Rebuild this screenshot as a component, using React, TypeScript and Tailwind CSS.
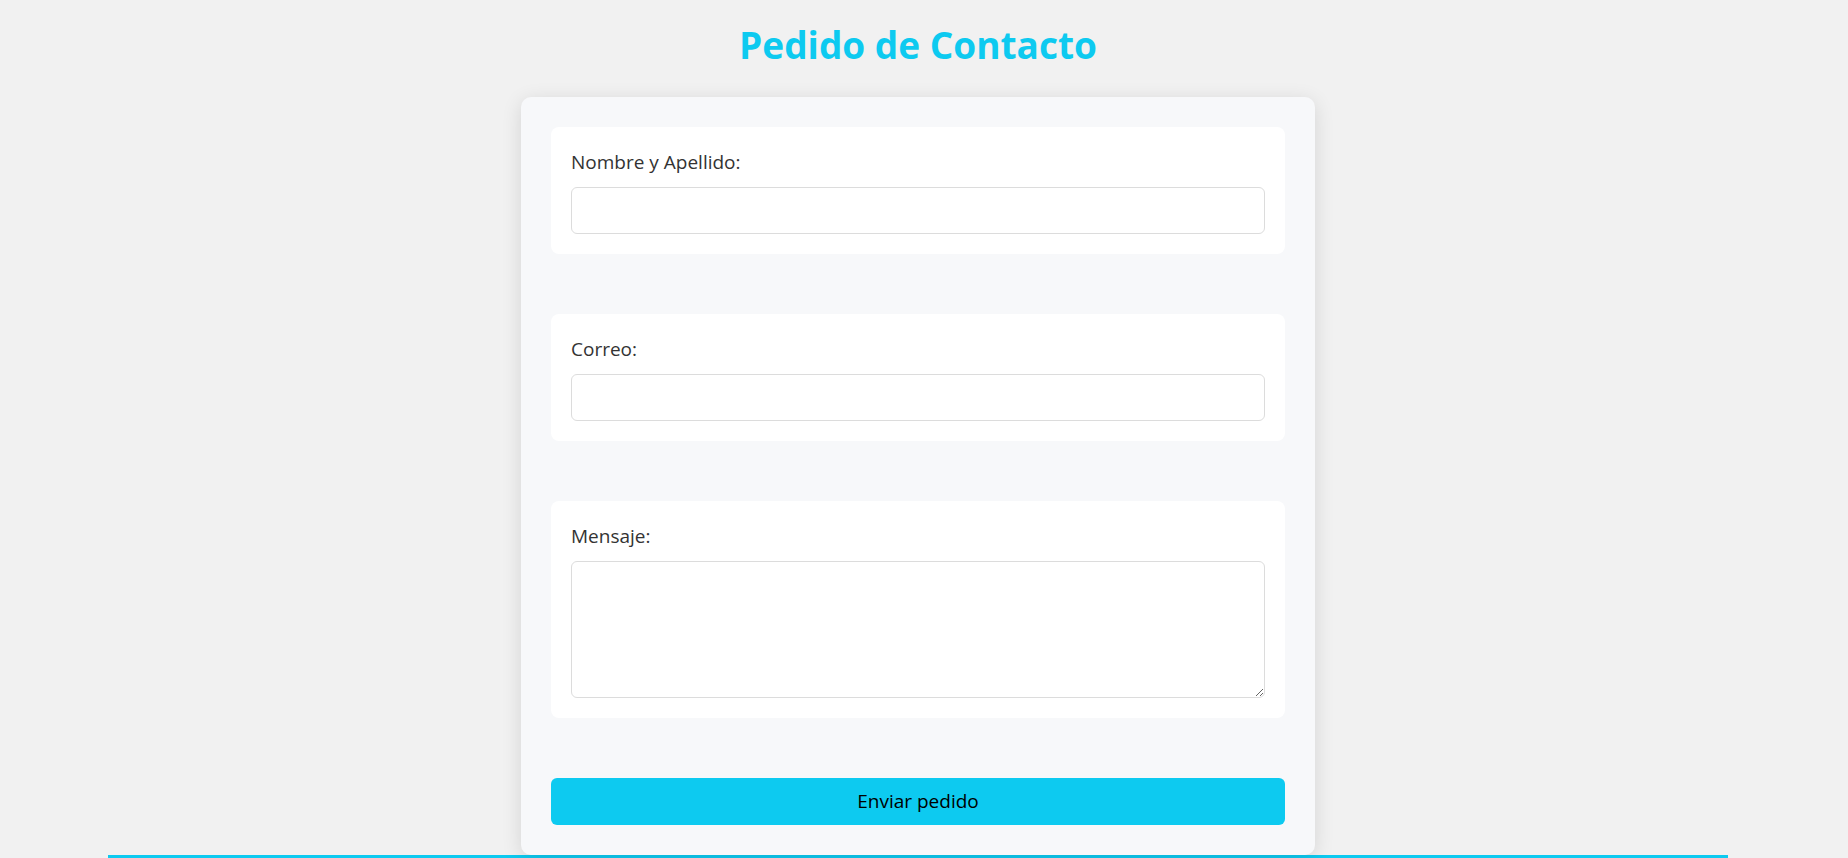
import React from 'react';

const font = { fontFamily: '"Open Sans", "Noto Sans", sans-serif' };

interface FieldProps {
  label: string;
  multiline?: boolean;
}

const Field: React.FC<FieldProps> = ({ label, multiline }) => {
  return (
    <div className="bg-white rounded-lg px-5 pt-[22px] pb-5">
      <label className="block text-[19px] leading-[27px] text-[#333] mb-[11px]">{label}</label>
      {multiline ? (
        <textarea className="block w-full h-[137px] rounded-md border border-[#dcdcdc] bg-white px-3 py-2 outline-none" />
      ) : (
        <input type="text" className="block w-full h-[47px] rounded-md border border-[#dcdcdc] bg-white px-3 outline-none" />
      )}
    </div>
  );
};

const App: React.FC = () => {
  return (
    <div className="min-h-screen bg-[#f1f1f1] overflow-hidden" style={font}>
      <div className="w-[1836px]">
        <h1 className="pt-[22px] mb-[29px] text-center text-[37px] leading-[46px] font-bold text-[#0dcaf0]">
          Pedido de Contacto
        </h1>
        <form className="relative mx-auto w-[794px] bg-[#f7f8fa] rounded-[10px] shadow-[0_4px_20px_rgba(0,0,0,0.12)] px-[30px] pt-[30px] pb-[30px] flex flex-col gap-[60px]">
          <Field label="Nombre y Apellido:" />
          <Field label="Correo:" />
          <Field label="Mensaje:" multiline />
          <button type="button" className="h-[47px] w-full rounded-md bg-[#0dcaf0] text-[19px] text-black">
            Enviar pedido
          </button>
        </form>
        <div className="mx-auto w-[1620px] h-[4px] bg-[#0dcaf0]" />
      </div>
    </div>
  );
};

export default App;
